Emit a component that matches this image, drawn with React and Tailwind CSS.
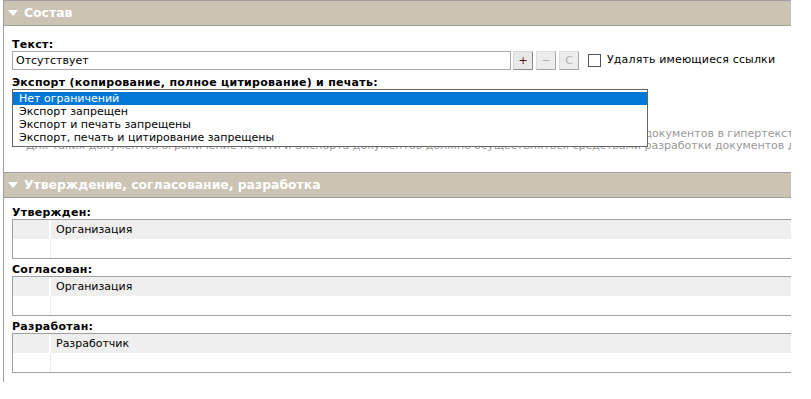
import React from 'react';

const SectionHeader = ({ title }) => (
  <div className="h-[26px] border-y border-[#a0a0a0] bg-[#cbc4b4] flex items-center">
    <svg width="10" height="7" viewBox="0 0 10 7" className="ml-[4px] mr-[6px]">
      <polygon points="0,0 10,0 5,6" fill="#ffffff" />
    </svg>
    <span className="text-white font-bold text-[12.4px] leading-none">{title}</span>
  </div>
);

const PersonTable = ({ label, column }) => (
  <div>
    <div className="font-bold leading-[12px] tracking-[0.28px]">{label}</div>
    <div className="border-y border-l border-[#a0a0a0]">
      <div className="flex h-[19px] bg-[#efefef]">
        <div className="w-[38px] border-r-2 border-white" />
        <div className="pl-[5px] leading-[19px]">{column}</div>
      </div>
      <div className="flex h-[19px] bg-white">
        <div className="w-[38px] border-r border-[#ececec]" />
        <div />
      </div>
    </div>
  </div>
);

const options = [
  'Нет ограничений',
  'Экспорт запрещен',
  'Экспорт и печать запрещены',
  'Экспорт, печать и цитирование запрещены',
];

export default function App() {
  return (
    <div className="w-[811px] h-[399px] bg-white text-black text-[11px] font-['DejaVu_Sans',sans-serif] overflow-hidden">
      <div className="ml-[3px] w-[788px] border-l border-[#a0a0a0] pb-[9px] overflow-hidden">
        <SectionHeader title="Состав" />

        {/* Текст */}
        <div className="pl-[8px] pt-[12px]">
          <div className="font-bold leading-[13px] tracking-[0.28px]">Текст:</div>
          <div className="flex items-center h-[19px]">
            <div className="w-[499px] h-[19px] border border-[#a9a9a9] pl-[3px] leading-[17px]">Отсутствует</div>
            <button className="ml-[2px] w-[20px] h-[19px] border border-t-[#d8d8d8] border-l-[#d8d8d8] border-r-[#8a8a8a] border-b-[#8a8a8a] bg-[#e8e8e8] text-[#5a1010] leading-none">+</button>
            <button className="ml-[3px] w-[20px] h-[19px] border border-t-[#dedede] border-l-[#dedede] border-r-[#a8a8a8] border-b-[#a8a8a8] bg-[#ececec] text-[#b0b0b0] leading-none">−</button>
            <button className="ml-[3px] w-[20px] h-[19px] border border-t-[#dedede] border-l-[#dedede] border-r-[#a8a8a8] border-b-[#a8a8a8] bg-[#ececec] text-[#b0b0b0] leading-none">C</button>
            <span className="ml-[9px] w-[13px] h-[13px] border border-[#555] bg-white" />
            <span className="ml-[6px] tracking-[0.15px]">Удалять имеющиеся ссылки</span>
          </div>

          {/* Экспорт */}
          <div className="mt-[6px] font-bold leading-[13px] tracking-[0.28px]">Экспорт (копирование, полное цитирование) и печать:</div>
          <div className="relative">
            <div className="absolute left-0 top-0 w-[636px] h-[58px] border border-[#646464] bg-white pt-[2px]">
              {options.map((o, i) => (
                <div
                  key={o}
                  className={i === 0 ? 'h-[13px] leading-[13px] pl-[6px] bg-[#0078d7] text-white' : 'h-[13px] leading-[13px] pl-[6px]'}
                >
                  {o}
                </div>
              ))}
            </div>
            <div className="pt-[39px] pl-[14px] text-[#9a9a9a] leading-[12px] whitespace-nowrap">
              <div>Установленные ограничения не распространяются на копирование, экспорт и печать разделов и прочих документов в гипертекстовом формате.</div>
              <div>Для таких документов ограничение печати и Экспорта документов должно осуществляться средствами разработки документов данного формата.</div>
            </div>
          </div>
        </div>

        <div className="mt-[20px]">
          <SectionHeader title="Утверждение, согласование, разработка" />
        </div>

        <div className="pl-[8px] pt-[9px] flex flex-col gap-[5px]">
          <PersonTable label="Утвержден:" column="Организация" />
          <PersonTable label="Согласован:" column="Организация" />
          <PersonTable label="Разработан:" column="Разработчик" />
        </div>
      </div>
    </div>
  );
}
